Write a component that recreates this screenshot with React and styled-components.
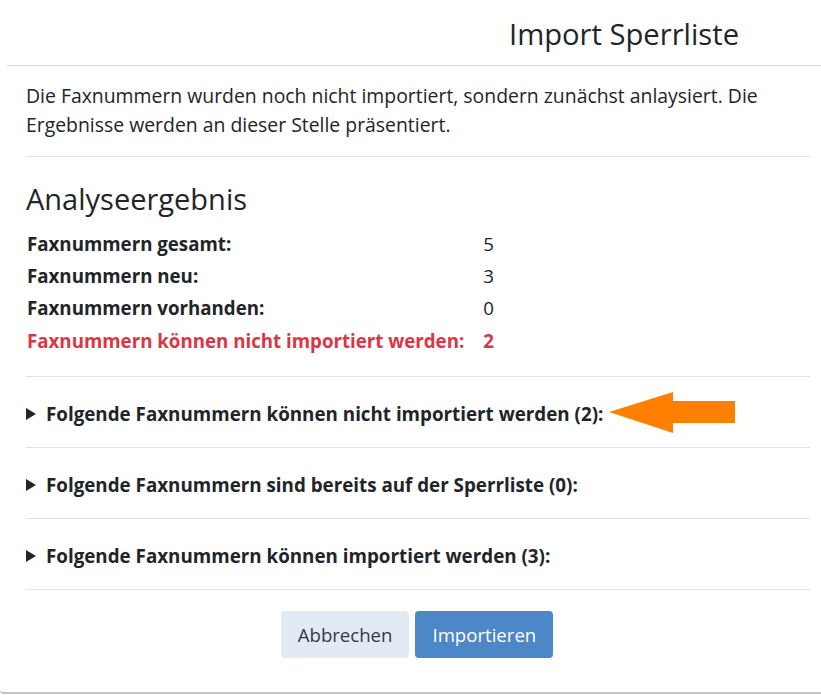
import React from 'react';
import styled, {createGlobalStyle} from 'styled-components';

const GlobalStyle = createGlobalStyle`
  html, body {
    margin: 0;
    padding: 0;
    background: #fdfdfd;
  }
  body {
    font-family: "Open Sans", "Noto Sans", sans-serif;
    color: #212529;
  }
`;

const stats = [
    {label: 'Faxnummern gesamt:', value: 5},
    {label: 'Faxnummern neu:', value: 3},
    {label: 'Faxnummern vorhanden:', value: 0},
    {label: 'Faxnummern können nicht importiert werden:', value: 2, danger: true},
];

const sections = [
    {title: 'Folgende Faxnummern können nicht importiert werden (2):', marked: true},
    {title: 'Folgende Faxnummern sind bereits auf der Sperrliste (0):'},
    {title: 'Folgende Faxnummern können importiert werden (3):'},
];

const App = () => {
    return (
        <>
            <GlobalStyle/>
            <Modal>
                <Header>
                    <Title>Import Sperrliste</Title>
                </Header>
                <Body>
                    <Intro>
                        Die Faxnummern wurden noch nicht importiert, sondern zunächst anlaysiert. Die
                        Ergebnisse werden an dieser Stelle präsentiert.
                    </Intro>
                    <Rule $top={17}/>
                    <Heading>Analyseergebnis</Heading>
                    <StatTable>
                        <tbody>
                        {stats.map((s) => (
                            <StatRow key={s.label} danger={s.danger}>
                                <StatLabel>{s.label}</StatLabel>
                                <StatValue danger={s.danger}>{s.value}</StatValue>
                            </StatRow>
                        ))}
                        </tbody>
                    </StatTable>
                    <Rule $top={20}/>
                    {sections.map((s) => (
                        <React.Fragment key={s.title}>
                            <Details>
                                <Summary>
                                    <Caret/>
                                    <span>{s.title}</span>
                                    {s.marked && (
                                        <Arrow viewBox="0 0 128 42" aria-hidden="true">
                                            <path d="M0 20 L64 0 L64 9 L126 9 L126 31 L64 31 L64 41 Z" fill="#ff8000"/>
                                        </Arrow>
                                    )}
                                </Summary>
                            </Details>
                            <Rule/>
                        </React.Fragment>
                    ))}
                    <Footer>
                        <Button>Abbrechen</Button>
                        <Button primary>Importieren</Button>
                    </Footer>
                </Body>
            </Modal>
        </>
    );
};

const Modal = styled.div`
  width: 829px;
  height: 694px;
  background: #ffffff;
  border-bottom: 2px solid #c4c4c4;
  border-bottom-left-radius: 4px;
  box-sizing: border-box;
  display: flex;
  flex-direction: column;
`;

const Header = styled.div`
  margin-left: 7px;
  height: 66px;
  padding-top: 3px;
  border-bottom: 1px solid #d6d6d6;
  box-sizing: border-box;
  display: flex;
  align-items: center;
  padding-left: 502px;
`;

const Title = styled.h1`
  margin: 0;
  font-size: 29.2px;
  font-weight: 400;
`;

const Body = styled.div`
  padding: 0 19px 0 26px;
  display: flex;
  flex-direction: column;
`;

const Intro = styled.p`
  margin: 15px 0 0;
  font-size: 19.4px;
  line-height: 29px;
`;

const Rule = styled.hr`
  margin: ${({$top}) => $top ?? 0}px 0 0;
  border: 0;
  border-top: 1px solid #e3e3e3;
  height: 0;
`;

const Heading = styled.h2`
  margin: 22px 0 8px;
  font-size: 29px;
  font-weight: 400;
  line-height: 40px;
`;

const StatTable = styled.table`
  border-collapse: collapse;
  font-size: 18.7px;
`;

const StatRow = styled.tr`
  height: 32.3px;
  color: ${({danger}) => (danger ? '#dc3545' : '#212529')};
`;

const StatLabel = styled.td`
  font-weight: 700;
  padding: 0 19px 0 1px;
  width: 1%;
  white-space: nowrap;
`;

const StatValue = styled.td`
  font-weight: ${({danger}) => (danger ? 700 : 400)};
  padding: 0;
`;

const Details = styled.div`
  position: relative;
  height: 70px;
  padding-top: 4px;
  box-sizing: border-box;
  display: flex;
  align-items: center;
`;

const Summary = styled.div`
  display: flex;
  align-items: center;
  gap: 10px;
  font-size: 18.8px;
  font-weight: 700;
`;

const Caret = styled.span`
  width: 0;
  height: 0;
  border-top: 6px solid transparent;
  border-bottom: 6px solid transparent;
  border-left: 10px solid #212529;
`;

const Arrow = styled.svg`
  position: absolute;
  left: 583px;
  top: 15px;
  width: 128px;
  height: 42px;
`;

const Footer = styled.div`
  display: flex;
  justify-content: center;
  gap: 6px;
  margin-top: 21px;
  padding-right: 2px;
`;

const Button = styled.button`
  height: 47px;
  padding: 0 17px;
  border: 0;
  border-radius: 4px;
  font-family: inherit;
  font-size: 18.6px;
  color: ${({primary}) => (primary ? '#ffffff' : '#333a40')};
  background: ${({primary}) => (primary ? '#4c87c8' : '#e2ebf5')};
  cursor: pointer;
`;

export default App;
